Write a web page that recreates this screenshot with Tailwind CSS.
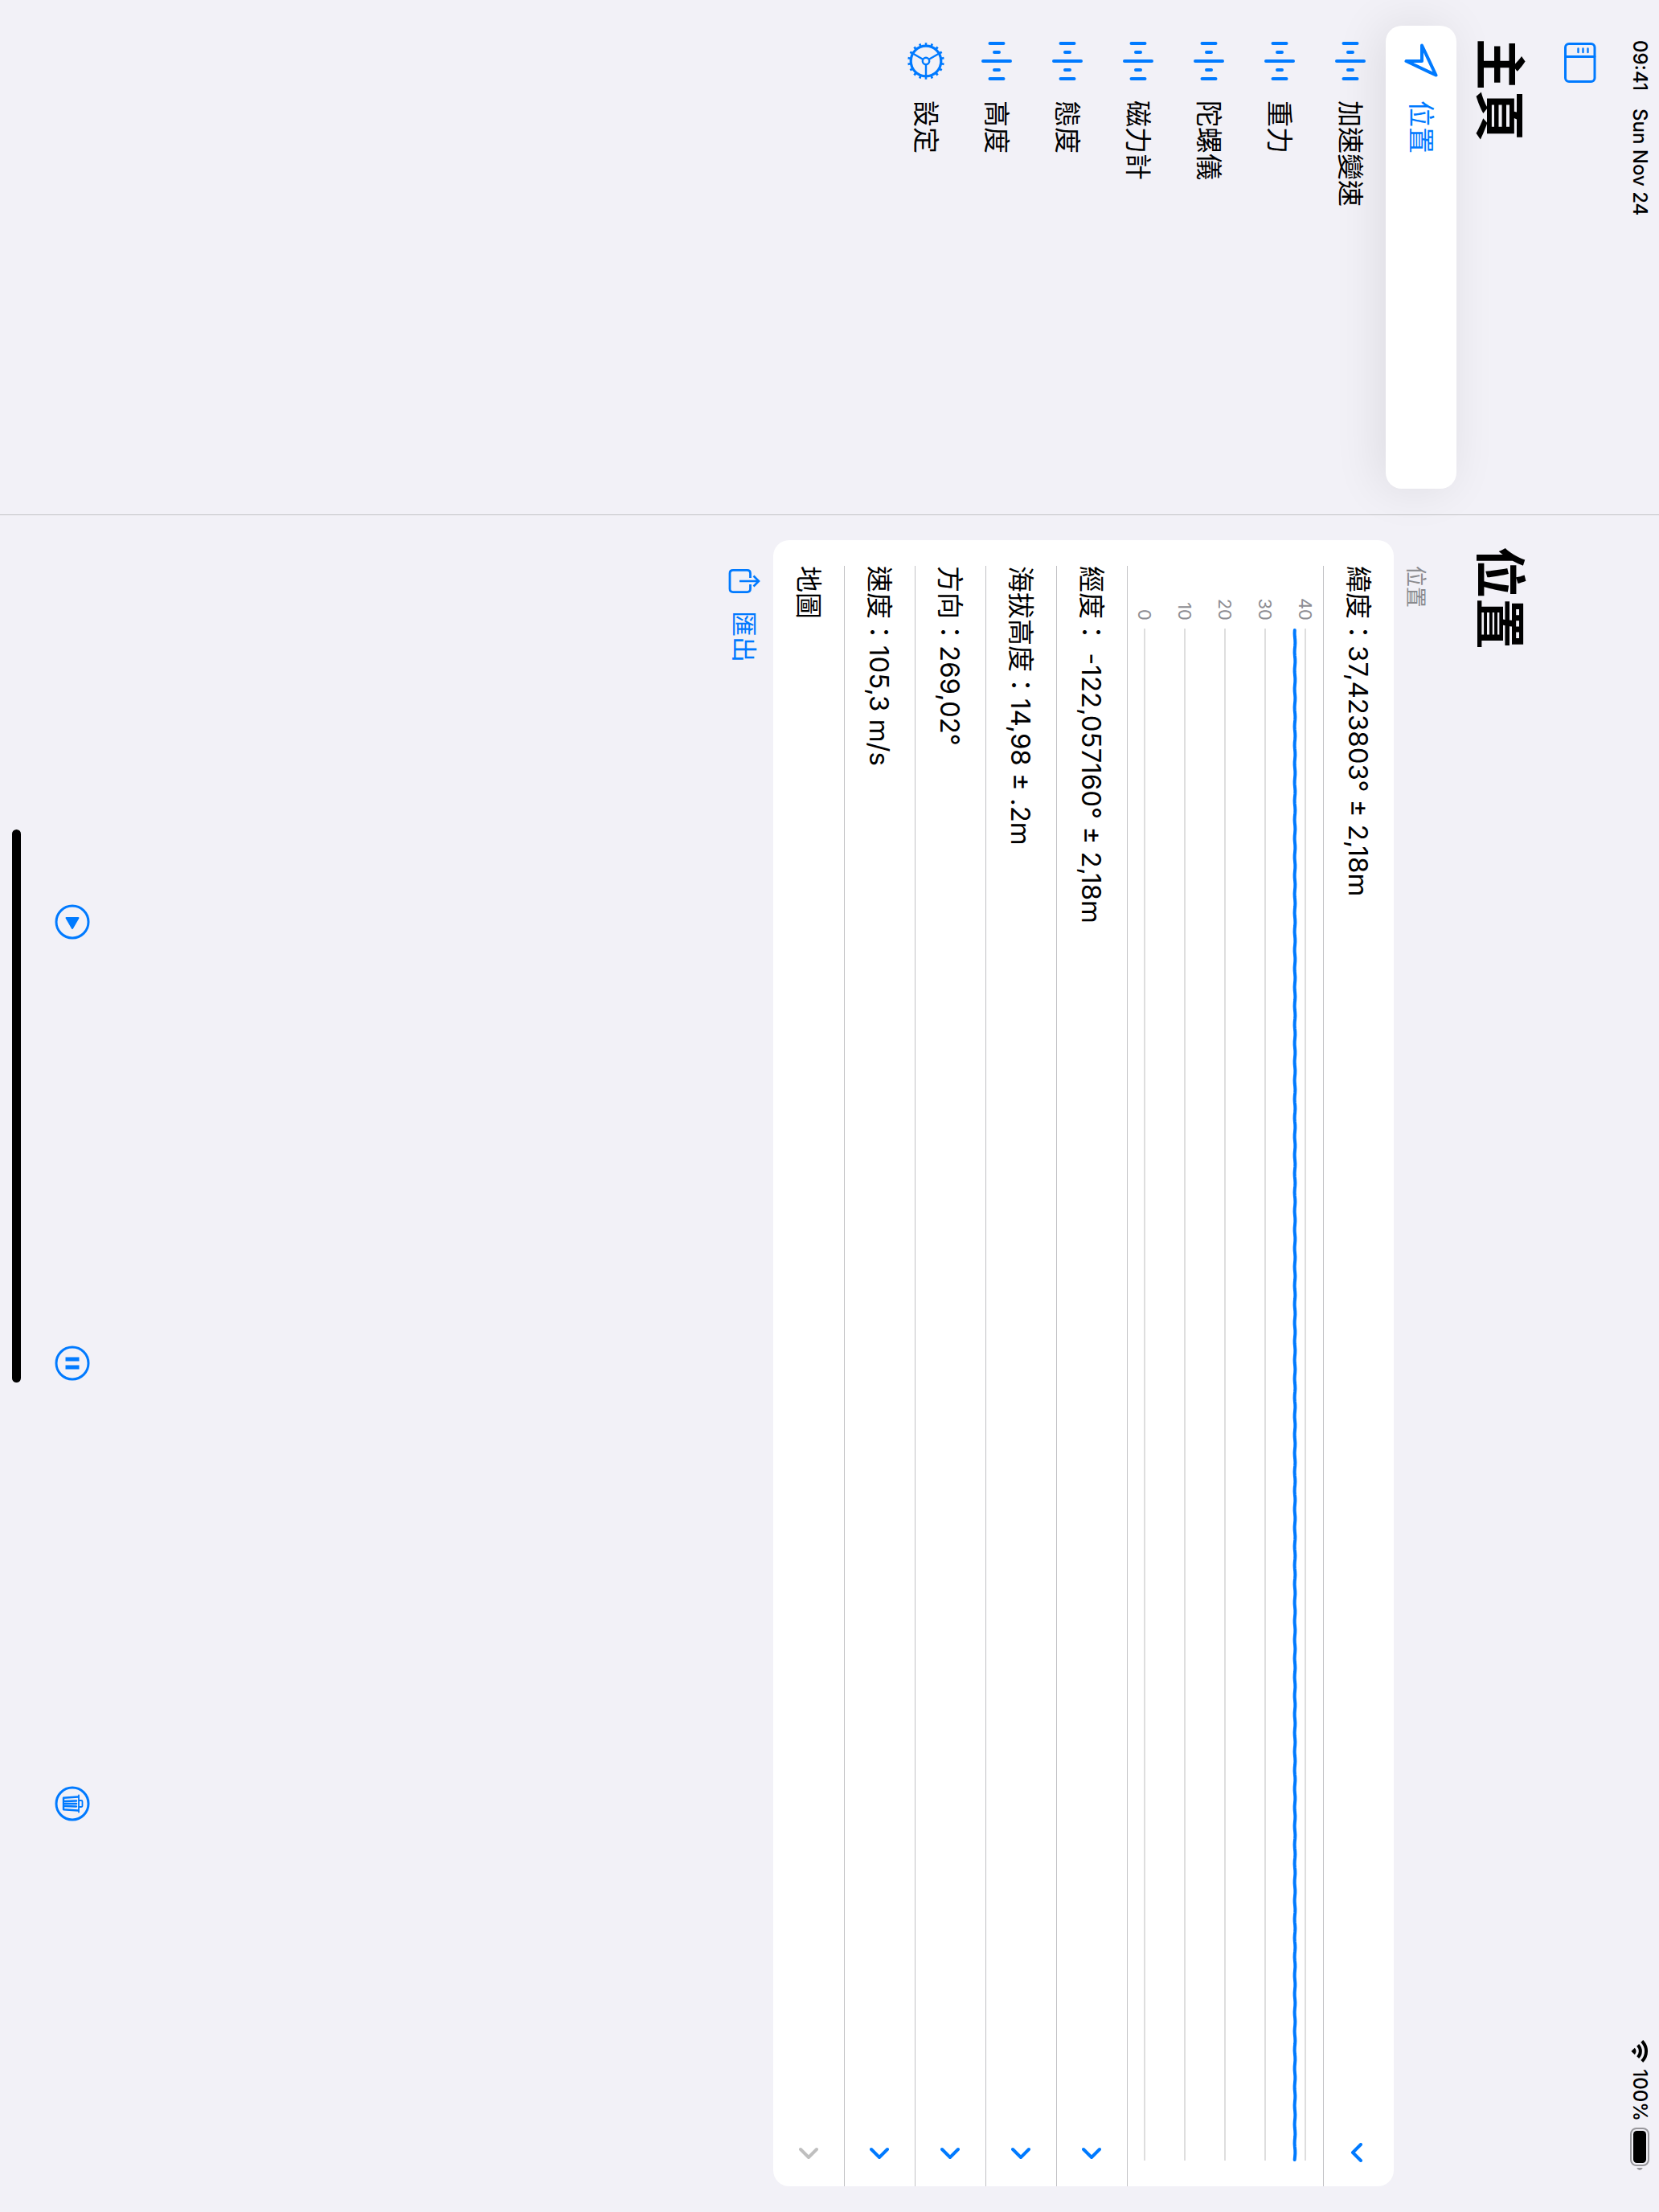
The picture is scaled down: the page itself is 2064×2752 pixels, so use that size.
<!DOCTYPE html>
<html lang="zh-Hant">
<head>
<meta charset="utf-8">
<meta name="viewport" content="width=device-width, initial-scale=1">
<title>位置</title>
<script src="https://cdn.jsdelivr.net/npm/@tailwindcss/browser@4"></script>
</head>
<body class="relative h-screen overflow-hidden bg-[#f2f1f7]">

<!-- Shared icon shapes -->
<svg class="hidden" aria-hidden="true">
  <symbol id="levels" viewBox="0 0 48 48">
    <path d="M2 15.500V32.500M13 21V27M24 7V41M35 21V27M46 15.500V32.500" fill="none" stroke="currentColor" stroke-width="4" stroke-linecap="round"/>
  </symbol>
  <symbol id="chevron-right" viewBox="0 0 24 24">
    <path d="M8 2L18 12L8 22" fill="none" stroke="currentColor" stroke-width="4" stroke-linecap="round" stroke-linejoin="round"/>
  </symbol>
  <symbol id="chevron-down" viewBox="0 0 24 24">
    <path d="M2 9L12 19L22 9" fill="none" stroke="currentColor" stroke-width="4" stroke-linecap="round" stroke-linejoin="round"/>
  </symbol>
</svg>

<!-- Landscape screen, turned a quarter clockwise -->
<div class="absolute left-full top-0 flex min-h-[100vw] w-[100vh] origin-top-left rotate-90 bg-[#f2f1f7] font-['Inter','Noto_Sans_CJK_TC',sans-serif] text-[33px] leading-[48px] text-black">

  <aside class="flex w-[641px] shrink-0 flex-col border-r border-[#c2c2c5]">
    <div class="flex h-12 items-center gap-[22px] pl-[50px] text-2xl font-medium">
      <time>09:41</time>
      <span>Sun Nov 24</span>
    </div>
    <div class="flex h-[100px] items-center pl-[52px]">
      <button type="button" aria-label="側邊欄" class="text-[#007aff]">
        <svg class="block h-10 w-[52px]" viewBox="0 0 52 40" fill="none" stroke="currentColor" stroke-linecap="round">
          <rect x="2.500" y="2" width="47" height="36.500" rx="4.500" stroke-width="3"/>
          <path d="M18.500 2V38" stroke-width="2.800"/>
          <path d="M8.500 10.500H13M8.500 16.500H13M8.500 22.500H13" stroke-width="2.400"/>
        </svg>
      </button>
    </div>
    <h1 class="flex h-[104px] items-center pb-1 pl-12 text-[64px] font-bold leading-[80px]">主頁</h1>
    <nav class="flex flex-col px-8">
      <a href="#location" aria-current="page" class="flex h-[88px] items-center gap-[25px] rounded-[20px] bg-white pl-5 text-[#007aff] shadow-[0_8px_60px_rgba(0,0,0,0.09)]">
        <svg class="size-12" viewBox="-24 -24 48 48" fill="none" stroke="currentColor" stroke-width="4" stroke-linejoin="round"><path d="M-19.500 -1L17.500 -18.500L0 18.500V-1Z"/></svg>
        <span>位置</span>
      </a>
      <a href="#acceleration" class="flex h-[88px] items-center gap-[25px] pl-5"><svg class="size-12 text-[#007aff]"><use href="#levels"/></svg><span>加速變速</span></a>
      <a href="#gravity" class="flex h-[88px] items-center gap-[25px] pl-5"><svg class="size-12 text-[#007aff]"><use href="#levels"/></svg><span>重力</span></a>
      <a href="#gyroscope" class="flex h-[88px] items-center gap-[25px] pl-5"><svg class="size-12 text-[#007aff]"><use href="#levels"/></svg><span>陀螺儀</span></a>
      <a href="#magnetometer" class="flex h-[88px] items-center gap-[25px] pl-5"><svg class="size-12 text-[#007aff]"><use href="#levels"/></svg><span>磁力計</span></a>
      <a href="#attitude" class="flex h-[88px] items-center gap-[25px] pl-5"><svg class="size-12 text-[#007aff]"><use href="#levels"/></svg><span>態度</span></a>
      <a href="#altitude" class="flex h-[88px] items-center gap-[25px] pl-5"><svg class="size-12 text-[#007aff]"><use href="#levels"/></svg><span>高度</span></a>
      <a href="#settings" class="flex h-[88px] items-center gap-[25px] pl-5">
        <svg class="size-12 text-[#007aff]" viewBox="-24 -24 48 48" fill="none" stroke="currentColor">
          <circle r="18.800" stroke-width="3.200"/>
          <circle r="21.300" stroke-width="3" pathLength="180" stroke-dasharray="3.600 6.400" stroke-dashoffset="1.800"/>
          <circle r="4.200" stroke-width="2.400"/>
          <path d="M5 0H18.500M-2.500 4.300L-9.200 16M-2.500 -4.300L-9.200 -16" stroke-width="2.400"/>
        </svg>
        <span>設定</span>
      </a>
    </nav>
  </aside>

  <main class="flex min-w-0 grow flex-col" id="location">
    <div class="flex h-12 items-center justify-end pr-[51px] text-2xl font-medium">
      <svg class="mr-2 h-6 w-7" viewBox="0 0 28 24" fill="none" stroke="currentColor" stroke-width="4">
        <path d="M1.500 9.200A17.500 17.500 0 0 1 26.500 9.200"/>
        <path d="M6.300 14.300A11 11 0 0 1 21.700 14.300"/>
        <path d="M14 22.500L9.800 18.200A6 6 0 0 1 18.200 18.200Z" fill="currentColor" stroke="none"/>
      </svg>
      <span>100%</span>
      <svg class="ml-2 h-6 w-[54px]" viewBox="0 0 54 24">
        <rect x="1" y="1" width="46" height="22" rx="7" fill="none" stroke="#98979c" stroke-width="2"/>
        <rect x="4" y="4" width="40" height="16" rx="4.500" fill="currentColor"/>
        <path d="M50 8.200Q53 9.500 53 12T50 15.800Z" fill="#98979c"/>
      </svg>
    </div>
    <h2 class="mt-[100px] flex h-[104px] items-center pb-1 pl-[39px] text-[64px] font-bold leading-[80px]">位置</h2>

    <section class="flex flex-col px-8 pl-[31px]">
      <h3 class="flex h-[78px] items-center pl-8 pt-6 text-[26px] leading-9 text-[#8a8a8e]">位置</h3>

      <div class="flex flex-col rounded-[20px] bg-white pl-8">
        <button type="button" aria-expanded="true" class="flex h-[88px] items-center justify-between border-b border-[#c2c2c5] pr-[30px] text-left">
          <span>緯度&#xFF1A;37,423803° ± 2,18m</span>
          <svg class="size-6 text-[#007aff]"><use href="#chevron-down"/></svg>
        </button>

        <div class="relative flex flex-col gap-[18px] border-b border-[#c2c2c5] pb-[5px] pr-8 pt-[6px] text-[22px] leading-8 text-[#8e8e93]">
          <div class="flex items-center gap-[10px]"><span class="w-[68px] text-right">40</span><span class="h-[2px] grow bg-[#dedede]"></span></div>
          <div class="flex items-center gap-[10px]"><span class="w-[68px] text-right">30</span><span class="h-[2px] grow bg-[#dedede]"></span></div>
          <div class="flex items-center gap-[10px]"><span class="w-[68px] text-right">20</span><span class="h-[2px] grow bg-[#dedede]"></span></div>
          <div class="flex items-center gap-[10px]"><span class="w-[68px] text-right">10</span><span class="h-[2px] grow bg-[#dedede]"></span></div>
          <div class="flex items-center gap-[10px]"><span class="w-[68px] text-right">0</span><span class="h-[2px] grow bg-[#dedede]"></span></div>
          <div class="absolute left-[78px] right-[31px] top-[25px] h-5">
            <svg class="block h-full w-full" viewBox="0 0 1908 20" preserveAspectRatio="none">
              <polyline id="series" fill="none" stroke="#007aff" stroke-width="4" stroke-linecap="round" stroke-linejoin="round"/>
            </svg>
          </div>
        </div>

        <button type="button" aria-expanded="false" class="flex h-[88px] items-center justify-between border-b border-[#c2c2c5] pr-[30px] text-left">
          <span>經度&#xFF1A; -122,057160° ± 2,18m</span>
          <svg class="size-6 text-[#007aff]"><use href="#chevron-right"/></svg>
        </button>
        <button type="button" aria-expanded="false" class="flex h-[88px] items-center justify-between border-b border-[#c2c2c5] pr-[30px] text-left">
          <span>海拔高度&#xFF1A;14,98 ± .2m</span>
          <svg class="size-6 text-[#007aff]"><use href="#chevron-right"/></svg>
        </button>
        <button type="button" aria-expanded="false" class="flex h-[88px] items-center justify-between border-b border-[#c2c2c5] pr-[30px] text-left">
          <span>方向&#xFF1A;269,02°</span>
          <svg class="size-6 text-[#007aff]"><use href="#chevron-right"/></svg>
        </button>
        <button type="button" aria-expanded="false" class="flex h-[88px] items-center justify-between border-b border-[#c2c2c5] pr-[30px] text-left">
          <span>速度&#xFF1A;105,3 m/s</span>
          <svg class="size-6 text-[#007aff]"><use href="#chevron-right"/></svg>
        </button>
        <button type="button" class="flex h-[88px] items-center justify-between pr-[30px] text-left">
          <span>地圖</span>
          <svg class="size-6 text-[#bfbfbf]"><use href="#chevron-right"/></svg>
        </button>
      </div>

      <button type="button" class="ml-8 flex h-[72px] items-center gap-4 self-start text-[32px] text-[#007aff]">
        <svg class="size-10" viewBox="0 0 40 40" fill="none" stroke="currentColor" stroke-width="2.800">
          <path d="M15 12.500H9.400Q5.400 12.500 5.400 16.500V34Q5.400 38 9.400 38H28.600Q32.600 38 32.600 34V16.500Q32.600 12.500 28.600 12.500H23"/>
          <path d="M19 26V2.500M12.500 8.500L19 2L25.500 8.500" stroke-width="2.600"/>
        </svg>
        <span class="pt-[2px]">匯出</span>
      </button>
    </section>

    <footer class="mt-auto flex justify-evenly pb-[66px] pr-[2px] text-[#007aff]">
      <button type="button" aria-label="播放" class="flex h-12 w-[84px] items-center justify-center">
        <svg class="h-11 w-11" viewBox="-22 -22 44 44" fill="none" stroke="currentColor">
          <circle r="20" stroke-width="3"/>
          <path d="M-5 -7.500V7.500L8 0Z" fill="currentColor" stroke-width="2" stroke-linejoin="round"/>
        </svg>
      </button>
      <button type="button" aria-label="暫停" class="flex h-12 w-[84px] items-center justify-center">
        <svg class="h-11 w-11" viewBox="-22 -22 44 44" fill="none" stroke="currentColor">
          <circle r="20" stroke-width="3"/>
          <path d="M-7.500 -8.500h5v17h-5zM2.500 -8.500h5v17h-5z" fill="currentColor" stroke="none"/>
        </svg>
      </button>
      <button type="button" aria-label="刪除" class="flex h-12 w-[84px] items-center justify-center">
        <svg class="h-11 w-11" viewBox="-22 -22 44 44" fill="none" stroke="currentColor" stroke-linecap="round" stroke-linejoin="round">
          <circle r="20" stroke-width="3"/>
          <path d="M-8.500 -7L-7.300 11H7.300L8.500 -7M-3.500 -5L-3 9M0 -5V9M3.500 -5L3 9" stroke-width="2.400"/>
          <path d="M-10.500 -8H10.500M-4 -8V-11Q-4 -12.500 -2.500 -12.500H2.500Q4 -12.500 4 -11V-8" stroke-width="1.800"/>
        </svg>
      </button>
    </footer>
  </main>

  <div class="absolute bottom-[15px] left-1/2 h-[11px] w-1/4 -translate-x-1/2 rounded-full bg-black"></div>
</div>

<script>
  // Latitude samples: almost constant, with a slight jitter.
  const points = [];
  for (let x = 2; x <= 1906; x += 4) {
    points.push(x + ',' + (10 + 0.4 * Math.sin(x * 1.3)).toFixed(2));
  }
  document.getElementById('series').setAttribute('points', points.join(' '));
</script>
</body>
</html>
